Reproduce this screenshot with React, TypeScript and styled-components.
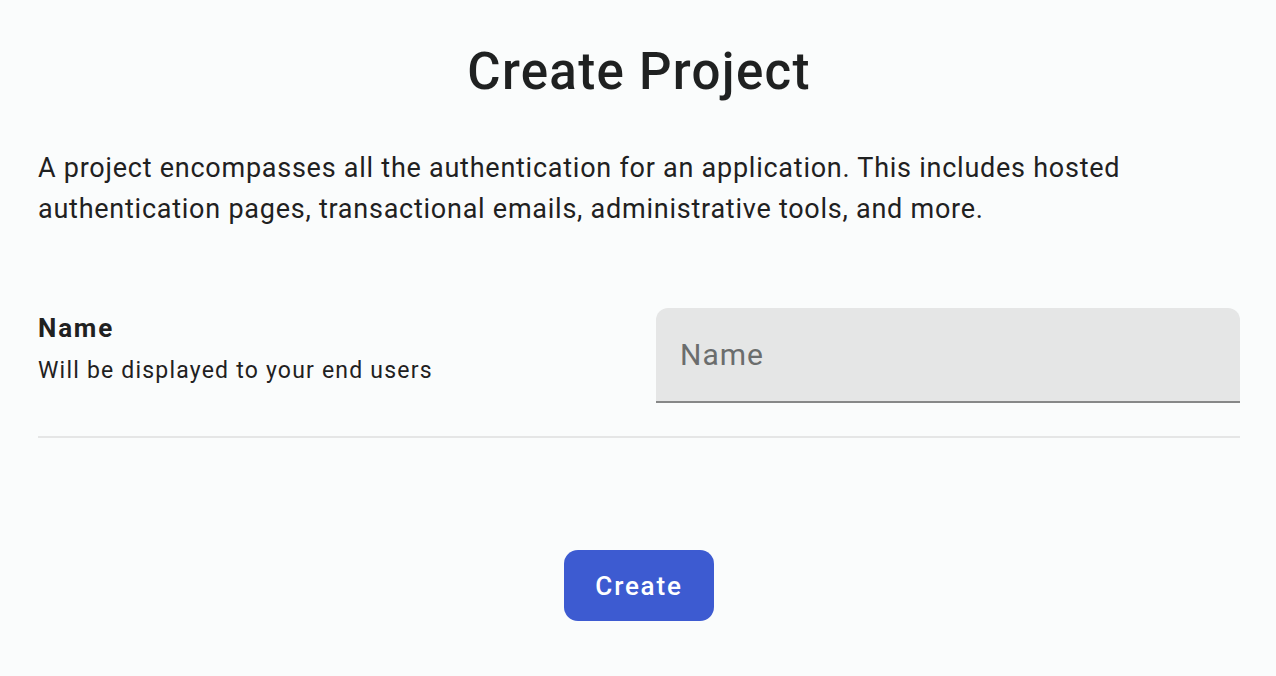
import React from "react";
import styled, { createGlobalStyle } from "styled-components";

const Global = createGlobalStyle`
  html, body { margin: 0; padding: 0; background: #fafcfc; }
  body { font-family: Roboto, "Noto Sans", Arial, sans-serif; color: #1f2121; }
  * { box-sizing: border-box; }
`;

const Page = styled.div`
  width: 1276px;
  height: 676px;
  padding: 0 36px 0 38px;
  display: flex;
  flex-direction: column;
`;

const Title = styled.h1`
  margin: 39px 0 0;
  text-align: center;
  font-size: 51px;
  font-weight: 500;
  line-height: 66px;
  letter-spacing: 1.3px;
  color: #1f2121;
`;

const Intro = styled.p`
  margin: 43px 0 0;
  font-size: 27px;
  line-height: 41px;
  letter-spacing: 0.75px;
  color: #1f2121;
`;

const FieldRow = styled.div`
  margin-top: 78px;
  display: grid;
  grid-template-columns: 1fr 584px;
  align-items: start;
  padding-bottom: 33px;
  border-bottom: 2px solid #e5e6e6;
`;

const FieldInfo = styled.div`
  display: flex;
  flex-direction: column;
  padding-top: 4px;
`;

const FieldLabel = styled.div`
  font-size: 26px;
  font-weight: 700;
  line-height: 32px;
  letter-spacing: 1.8px;
  color: #1f2121;
`;

const FieldHint = styled.div`
  margin-top: 12px;
  font-size: 23px;
  line-height: 30px;
  letter-spacing: 1.2px;
  color: #1f2121;
`;

const InputBox = styled.input`
  width: 584px;
  height: 95px;
  border: none;
  border-bottom: 2px solid #878888;
  border-radius: 12px 12px 0 0;
  background: #e5e6e6;
  padding: 0 24px;
  font-family: Roboto, "Noto Sans", Arial, sans-serif;
  font-size: 30px;
  letter-spacing: 1px;
  color: #1f2121;
  outline: none;
  &::placeholder { color: #6b6d6d; }
`;

const Actions = styled.div`
  margin-top: 112px;
  display: flex;
  justify-content: center;
`;

const PrimaryButton = styled.button`
  width: 150px;
  height: 71px;
  border: none;
  border-radius: 14px;
  background: #3d5bd1;
  color: #ffffff;
  font-family: Roboto, "Noto Sans", Arial, sans-serif;
  font-size: 26px;
  font-weight: 500;
  letter-spacing: 1.8px;
  cursor: pointer;
`;

export default function App() {
  return (
    <>
      <Global />
      <Page>
        <Title>Create Project</Title>
        <Intro>
          A project encompasses all the authentication for an application. This includes hosted
          authentication pages, transactional emails, administrative tools, and more.
        </Intro>
        <FieldRow>
          <FieldInfo>
            <FieldLabel>Name</FieldLabel>
            <FieldHint>Will be displayed to your end users</FieldHint>
          </FieldInfo>
          <InputBox placeholder="Name" />
        </FieldRow>
        <Actions>
          <PrimaryButton>Create</PrimaryButton>
        </Actions>
      </Page>
    </>
  );
}
